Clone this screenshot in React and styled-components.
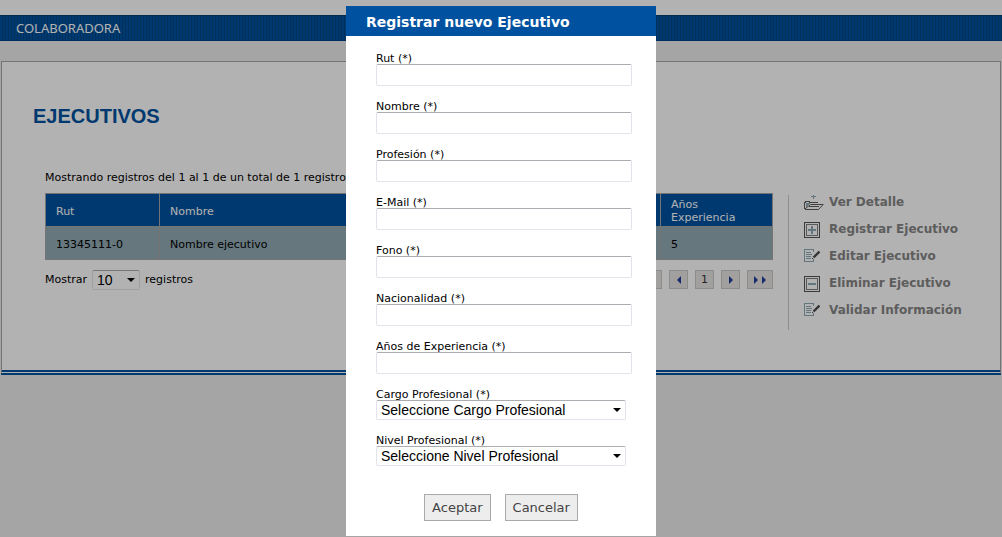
import React from "react"
import styled, { createGlobalStyle } from "styled-components"

const fields = ["Rut", "Nombre", "Profesión", "E-Mail", "Fono", "Nacionalidad", "Años de Experiencia"]
const selects = ["Cargo Profesional", "Nivel Profesional"]

const actions = [
    { text: "Ver Detalle", Icon: FolderIcon },
    { text: "Registrar Ejecutivo", Icon: PlusIcon },
    { text: "Editar Ejecutivo", Icon: EditIcon },
    { text: "Eliminar Ejecutivo", Icon: MinusIcon },
    { text: "Validar Información", Icon: EditIcon },
]

export default function App() {
    return (
        <>
            <GlobalStyle />
            <TopStrip />
            <NavBar>COLABORADORA</NavBar>
            <Panel>
                <h1>EJECUTIVOS</h1>
                <Columns>
                    <Listing>
                        <p>Mostrando registros del 1 al 1 de un total de 1 registros</p>
                        <Table>
                            <colgroup>
                                <col width="114" />
                                <col />
                                <col width="112" />
                            </colgroup>
                            <thead>
                                <tr>
                                    <th>Rut</th>
                                    <th>Nombre</th>
                                    <th>Años Experiencia</th>
                                </tr>
                            </thead>
                            <tbody>
                                <tr>
                                    <td>13345111-0</td>
                                    <td>Nombre ejecutivo</td>
                                    <td>5</td>
                                </tr>
                            </tbody>
                        </Table>
                        <TableFooter>
                            <PageSize>
                                Mostrar
                                <SelectBox $width="48px">
                                    <select>
                                        <option>10</option>
                                    </select>
                                    <Caret />
                                </SelectBox>
                                registros
                            </PageSize>
                            <Pages>
                                <PageButton $wide aria-label="Primera"><Arrows left double /></PageButton>
                                <PageButton aria-label="Anterior"><Arrows left /></PageButton>
                                <PageButton>1</PageButton>
                                <PageButton aria-label="Siguiente"><Arrows /></PageButton>
                                <PageButton $wide aria-label="Última"><Arrows double /></PageButton>
                            </Pages>
                        </TableFooter>
                    </Listing>
                    <Actions>
                        {actions.map(({ text, Icon }) => (
                            <a href="#" key={text}>
                                <IconSlot><Icon /></IconSlot>
                                {text}
                            </a>
                        ))}
                    </Actions>
                </Columns>
            </Panel>
            <Overlay>
                <Dialog role="dialog" aria-labelledby="titulo">
                    <h2 id="titulo">Registrar nuevo Ejecutivo</h2>
                    <Form onSubmit={(e) => e.preventDefault()}>
                        {fields.map((name) => (
                            <Field key={name}>
                                <label htmlFor={name}>{name} (*)</label>
                                <input id={name} type="text" />
                            </Field>
                        ))}
                        {selects.map((name) => (
                            <Field key={name}>
                                <label htmlFor={name}>{name} (*)</label>
                                <SelectBox $width="250px">
                                    <select id={name}>
                                        <option>Seleccione {name}</option>
                                    </select>
                                    <Caret />
                                </SelectBox>
                            </Field>
                        ))}
                        <Buttons>
                            <button>Aceptar</button>
                            <button type="button">Cancelar</button>
                        </Buttons>
                    </Form>
                </Dialog>
            </Overlay>
        </>
    )
}

function FolderIcon() {
    return (
        <svg width="20" height="16" viewBox="0 0 20 16" fill="none">
            <path d="M9 0h1v1h2v1h-2v2H9V2H7V1h2z" fill="#8fa9b5" />
            <path d="M2 8h4v1H5v1H4v1H3v1H2z" fill="#8fa9b5" />
            <path d="M.5 14V7.500H1.500V6.500H5.500V7.500H14" stroke="#5c5c5c" shapeRendering="crispEdges" />
            <path d="M1 14L6.500 9.500H19.200L14.500 14.500H1M5 11.500H15" stroke="#5c5c5c" />
        </svg>
    )
}

function PlusIcon() {
    return (
        <svg width="16" height="16" viewBox="0 0 16 16" fill="none" shapeRendering="crispEdges">
            <path d="M.5 .5h15v15H.5z" stroke="#555" />
            <path d="M2.500 2.500h11v11h-11z" stroke="#808080" />
            <path d="M4 7h8v2H4zM7 4h2v8H7z" fill="#8fa9b5" />
        </svg>
    )
}

function MinusIcon() {
    return (
        <svg width="16" height="16" viewBox="0 0 16 16" fill="none" shapeRendering="crispEdges">
            <path d="M.5 .5h15v15H.5z" stroke="#555" />
            <path d="M2.500 2.500h11v11h-11z" stroke="#808080" />
            <path d="M4 7h8v2H4z" fill="#8fa9b5" />
        </svg>
    )
}

function EditIcon() {
    return (
        <svg width="16" height="14" viewBox="0 0 16 14" fill="none">
            <path d="M9.500 3V.5H.5v12h9V10M2 3.500h5M2 5.500h6M2 7.500h5M2 9.500h5" stroke="#8fa9b5" shapeRendering="crispEdges" />
            <path d="M9.500 8.500L15.500 2.500" stroke="#4c4c4c" strokeWidth="2.400" />
            <path d="M8 9h1v1H8z" fill="#4c4c4c" />
        </svg>
    )
}

function Arrows({ left, double }) {
    return (
        <svg width={double ? 14 : 6} height="8" viewBox={double ? "0 0 14 8" : "0 0 6 8"} fill="#1f3d9c">
            <path
                transform={left ? `translate(${double ? 14 : 6} 0) scale(-1 1)` : undefined}
                d={double ? "M1 0l4 4-4 4zM9 0l4 4-4 4z" : "M1 0l4 4-4 4z"}
            />
        </svg>
    )
}

const GlobalStyle = createGlobalStyle`
    * {
        box-sizing: border-box;
    }
    body {
        margin: 0;
        background: #ededed;
        color: #000;
        font-family: Verdana, "DejaVu Sans", sans-serif;
        font-size: 11px;
        line-height: 14px;
    }
    h1, h2, p {
        margin: 0;
    }
`
const TopStrip = styled.div`
    height: 15px;
    background: #fff;
`
const NavBar = styled.nav`
    height: 26px;
    padding-left: 16px;
    border-top: 1px solid #003f72;
    border-bottom: 1px solid #003f86;
    background: repeating-linear-gradient(90deg, #0052a0 0 2px, #004684 2px 3px);
    color: #fff;
    font-family: "Noto Sans", sans-serif;
    font-size: 13px;
    line-height: 24px;
`
const Panel = styled.main`
    margin: 20px 1px 0;
    padding: 41px 31px 40px;
    border: 1px solid #a6a6a6;
    border-bottom: 5px double #0052a0;
    background: #fff;
    h1{
        color: #0052a0;
        font-family: "Liberation Sans", Arial, sans-serif;
        font-size: 20px;
        line-height: 26px;
    }
`
const Columns = styled.div`
    display: flex;
    margin: 42px 0 0 12px;
`
const Listing = styled.section`
    flex: 1;
    p{
        margin-bottom: 8px;
    }
`
const Table = styled.table`
    width: 100%;
    table-layout: fixed;
    border-collapse: collapse;
    th, td{
        height: 33px;
        padding: 4px 10px 2px;
        border: 1px solid #a6a6a6;
        text-align: left;
        line-height: 13px;
    }
    th{
        background: #0052a0;
        color: #fff;
        font-weight: normal;
    }
    td{
        background: #93abb5;
    }
`
const TableFooter = styled.div`
    display: flex;
    justify-content: space-between;
    margin-top: 10px;
`
const PageSize = styled.label`
    display: flex;
    align-items: center;
    gap: 5px;
`
const SelectBox = styled.span`
    display: flex;
    align-items: center;
    width: ${(props) => props.$width};
    height: 20px;
    padding-right: 4px;
    border: 1px solid #e3e3eb;
    border-top-color: #abadb3;
    border-radius: 2px;
    background: #fff;
    select{
        flex: 1;
        min-width: 0;
        height: 18px;
        padding: 0 0 0 4px;
        border: 0;
        appearance: none;
        background: transparent;
        color: #000;
        font-family: "Liberation Sans", Arial, sans-serif;
        font-size: 14px;
    }
`
const Caret = styled.i`
    border: 4px solid transparent;
    border-top-color: #000;
    border-bottom: 0;
    pointer-events: none;
`
const Pages = styled.div`
    display: flex;
    gap: 7px;
`
const PageButton = styled.button`
    display: flex;
    align-items: center;
    justify-content: center;
    width: ${(props) => (props.$wide ? "26px" : "19px")};
    height: 19px;
    padding: 0;
    border: 1px solid #ccc8c8;
    background: #e8e4e4;
    color: #333;
    font-family: inherit;
    font-size: 11px;
`
const Actions = styled.nav`
    display: flex;
    flex-direction: column;
    width: 181px;
    height: 135px;
    margin: 24px 0 0 15px;
    padding-left: 15px;
    border-left: 1px solid #ccc;
    a{
        display: flex;
        height: 27px;
        color: #868686;
        font-size: 12px;
        font-weight: bold;
        text-decoration: none;
    }
`
const IconSlot = styled.span`
    flex: none;
    width: 25px;
`
const Overlay = styled.div`
    position: fixed;
    inset: 0;
    display: flex;
    align-items: flex-start;
    justify-content: center;
    padding-top: 6px;
    background: rgba(0, 0, 0, 0.3);
`
const Dialog = styled.div`
    width: 310px;
    background: #fff;
    h2{
        padding: 2px 20px 0;
        background: #0052a0;
        color: #fff;
        font-size: 14px;
        line-height: 28px;
    }
`
const Form = styled.form`
    padding: 17px 30px 15px;
`
const Field = styled.div`
    display: flex;
    flex-direction: column;
    margin-bottom: 15px;
    label{
        line-height: 11px;
    }
    input{
        width: 256px;
        height: 22px;
        border: 1px solid #e3e3eb;
        border-top-color: #abadb3;
        border-radius: 2px;
        background: #fff;
    }
`
const Buttons = styled.div`
    display: flex;
    justify-content: center;
    gap: 14px;
    padding-top: 13px;
    button{
        height: 27px;
        padding: 0 7px;
        border: 1px solid #aaa;
        background: #ededed;
        color: #444;
        font-family: inherit;
        font-size: 13px;
    }
`
